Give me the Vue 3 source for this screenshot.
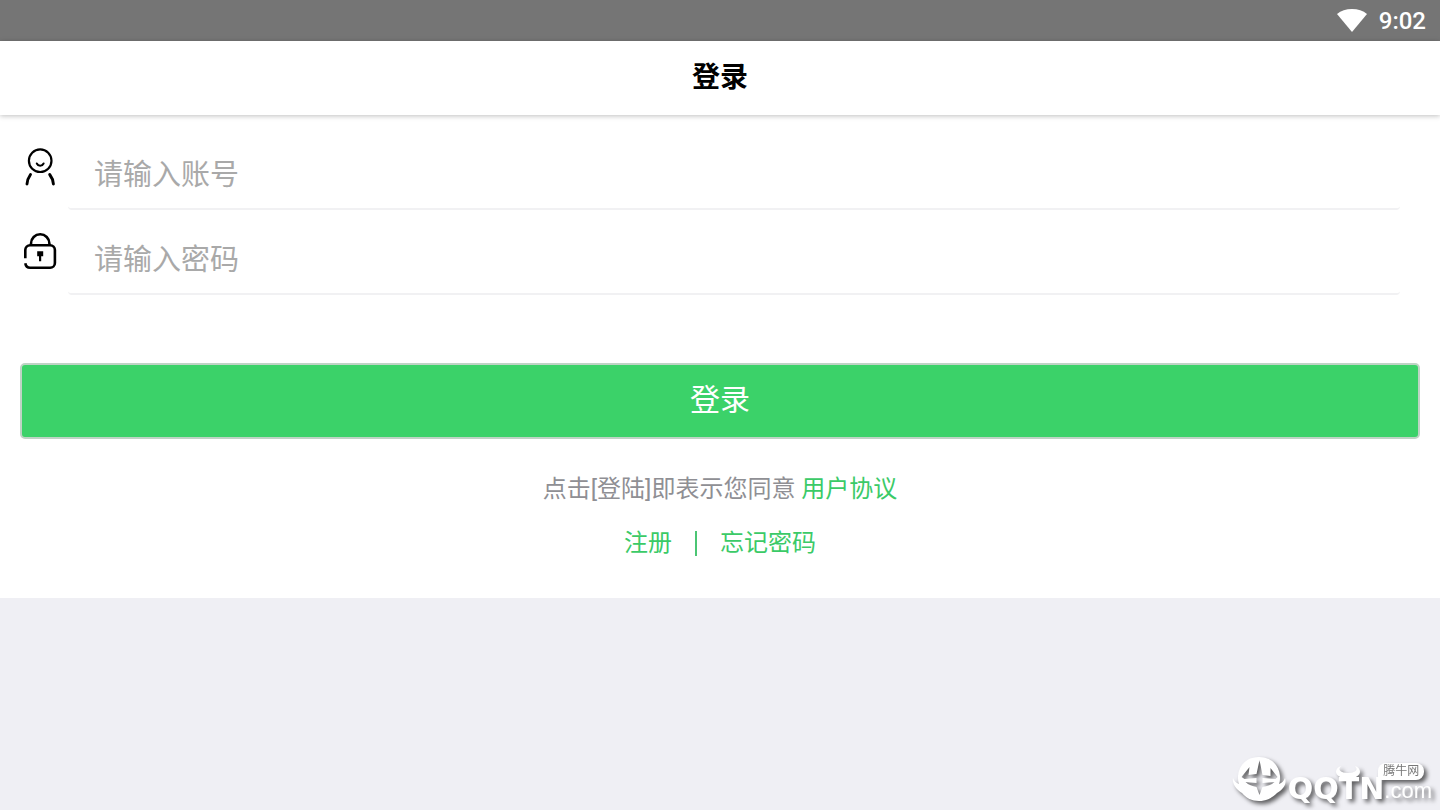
<script setup>
import { ref } from 'vue'

const account = ref('')
const password = ref('')
</script>

<template>
  <div class="screen">
    <div class="status">
      <svg class="wifi" viewBox="0 0 30 24" aria-hidden="true">
        <path d="M0 5C4 1.700 9 0 15 0s11 1.700 15 5L15 23z" fill="#fff" />
      </svg>
      <time>9:02</time>
    </div>

    <header class="bar">
      <h1>登录</h1>
    </header>

    <main>
      <form @submit.prevent>
        <div class="row">
          <label for="account" aria-label="账号">
            <svg viewBox="0 0 40 40" fill="none" stroke="#000" stroke-linecap="round">
              <circle cx="20.200" cy="13.700" r="11.300" stroke-width="2.200" />
              <path d="M16.800 16.500c1.400 3 5.400 3 6.800 0" stroke-width="2" />
              <path d="M10.500 27.500C8.200 30.800 7.200 33.500 7 37M29.700 27.500c2.500 3.300 3.500 6 3.700 9.500" stroke-width="2.900" />
            </svg>
          </label>
          <input id="account" v-model="account" type="text" placeholder="请输入账号" />
        </div>
        <div class="row">
          <label for="password" aria-label="密码">
            <svg viewBox="0 0 40 40" fill="none" stroke="#000" stroke-width="2.600">
              <path d="M11 13.500v-2a9.200 9.200 0 0 1 18.400 0v2" />
              <path d="M5.300 26.200V18a4.800 4.800 0 0 1 4.800-4.800h20a4.800 4.800 0 0 1 4.800 4.800v13a4.800 4.800 0 0 1-4.800 4.800h-20c-2.800 0-4.400-1.800-4.800-4.500" />
              <path d="M17.200 19.200h6v5h-2v5h-2.200v-5h-1.800z" fill="#000" stroke="none" />
            </svg>
          </label>
          <input id="password" v-model="password" type="password" placeholder="请输入密码" />
        </div>
        <button type="submit">登录</button>
      </form>
      <p class="terms">点击[登陆]即表示您同意 <a href="#terms">用户协议</a></p>
      <nav>
        <a href="#register">注册</a>
        <span class="divider"></span>
        <a href="#forgot">忘记密码</a>
      </nav>
    </main>

    <div class="mark">
      <svg class="emblem" viewBox="0 0 56 46" aria-hidden="true">
        <path fill="#fff" fill-rule="evenodd" d="M6 20C7 8 16 1 27 1s20 7 21 19c0 3 0 5-1 8 3-1 5-3 6-6 2 5-1 11-8 15-5 5-11 8-18 8s-13-3-17-8C4 34 0 27 1 22c1 3 3 5 6 6-1-3-1-5-1-8zM27.500 4l-3 14-8 1 1-8-8 10 3 2 12-1v5l-11-1c3 3 7 4 11 5l3 8 3-8c5-1 9-2 12-5l-12 1v-5l13 1 2-2-7-9v8l-8-1z" />
      </svg>
      <div class="word">
        <svg class="horns" viewBox="0 0 24 13" aria-hidden="true">
          <path fill="#fff" d="M5 0C2 1 0 3 0 6c1 5 6 6 12 6s11-1 12-6c0-3-2-5-5-6 4 4 0 7-7 7S1 4 5 0z" />
        </svg>
        <span class="name">QQTN</span>
      </div>
      <div class="tail">
        <span class="tag">腾牛网</span>
        <span class="com">.com</span>
      </div>
    </div>
  </div>
</template>

<style>
body {
  background: #efeff4;
}
</style>

<style scoped>
.screen {
  position: relative;
  min-height: 100vh;
  font-family: Roboto, "Noto Sans CJK SC", sans-serif;
  background: #efeff4;
}
.status {
  display: flex;
  align-items: center;
  justify-content: flex-end;
  gap: 12px;
  height: 41px;
  padding-right: 14px;
  box-sizing: border-box;
  background: #757575;
  color: #fff;
  font-size: 24px;
  line-height: 44px;
  font-weight: 500;
}
.wifi {
  width: 30px;
  height: 24px;
}
.bar {
  position: relative;
  height: 74px;
  background: #fff;
  box-shadow: 0 1px 5px rgba(0, 0, 0, 0.25);
}
h1 {
  margin: 0;
  font-size: 28px;
  line-height: 74px;
  font-weight: 700;
  text-align: center;
  color: #000;
}
main {
  padding: 20px 20px 37px;
  background: #fff;
}
.row {
  display: flex;
  gap: 8px;
  height: 75px;
  margin: 0 20px 10px 0;
}
label {
  width: 40px;
  padding-top: 12px;
}
label svg {
  display: block;
  width: 40px;
  height: 40px;
}
input {
  flex: 1;
  min-width: 0;
  padding: 6px 26px 0;
  border: 0;
  border-bottom: 2px solid #f1f1f3;
  border-radius: 4px;
  outline: 0;
  background: transparent;
  color: #000;
  font: 29px/40px Roboto, "Noto Sans CJK SC", sans-serif;
}
input::placeholder {
  color: #a9a9a9;
}
button {
  display: block;
  width: 100%;
  height: 76px;
  margin-top: 68px;
  padding: 0 0 2px;
  border: 2px solid #bfd3c5;
  border-radius: 5px;
  background: #3bd269;
  color: #fff;
  font: 30px/40px Roboto, "Noto Sans CJK SC", sans-serif;
}
.terms {
  margin: 32px 0 0;
  font-size: 24px;
  line-height: 36px;
  text-align: center;
  color: #8f8f94;
}
a {
  color: #3bca67;
  text-decoration: none;
}
nav {
  display: flex;
  align-items: center;
  justify-content: center;
  gap: 23px;
  margin-top: 18px;
  font-size: 24px;
  line-height: 36px;
}
.divider {
  width: 2px;
  height: 25px;
  background: #4bc574;
}
.mark {
  position: absolute;
  right: 8px;
  bottom: 8px;
  display: flex;
  align-items: flex-end;
  color: #fff;
  filter: drop-shadow(3px 3px 2px rgba(0, 0, 0, 0.6));
}
.emblem {
  width: 56px;
  height: 46px;
}
.word {
  position: relative;
}
.name {
  display: block;
  font: 700 30px/26px "DejaVu Sans", sans-serif;
}
.horns {
  position: absolute;
  left: 48px;
  bottom: 23px;
  width: 24px;
  height: 13px;
}
.tail {
  display: flex;
  flex-direction: column;
}
.tag {
  align-self: flex-start;
  margin-left: -6px;
  padding: 0 5px;
  border-radius: 8px 8px 8px 4px;
  background: #fff;
  color: #777;
  font-size: 12px;
  line-height: 17px;
}
.com {
  font: 22px/22px "Liberation Sans", sans-serif;
}
</style>
